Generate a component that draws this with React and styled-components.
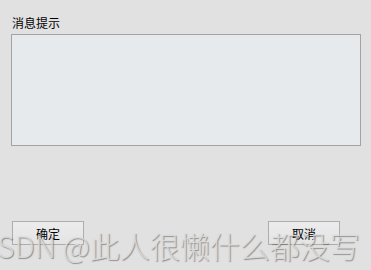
import React from "react";
import styled, { createGlobalStyle } from "styled-components";

const GlobalStyle = createGlobalStyle`
  html, body {
    margin: 0;
    padding: 0;
    background: #e1e1e1;
    font-family: "Noto Sans CJK SC", "Microsoft YaHei", sans-serif;
  }
`;

const Window = styled.div`
  position: relative;
  width: 371px;
  height: 270px;
  box-sizing: border-box;
  padding: 14px 10px 0 11px;
  display: flex;
  flex-direction: column;
  overflow: hidden;
`;

const Label = styled.div`
  font-size: 12px;
  line-height: 18px;
  color: #000;
  padding-left: 1px;
  margin-bottom: 2px;
`;

const MessageBox = styled.div`
  height: 110px;
  border: 1px solid #a3a3a3;
  background: #e6eaed;
`;

const ButtonRow = styled.div`
  display: flex;
  justify-content: space-between;
  margin-top: 75px;
  padding: 0 21px 0 1px;
`;

const Button = styled.button`
  width: 72px;
  height: 24px;
  padding: 0;
  border: 1px solid #adadad;
  background: linear-gradient(#ececec, #e4e4e4);
  font-family: "Noto Sans CJK SC", sans-serif;
  font-size: 12px;
  color: #000;
`;

// CSDN watermark laid over the bottom of the dialog
const Watermark = styled.div`
  position: absolute;
  left: -21px;
  top: 223px;
  white-space: nowrap;
  font-family: "Noto Sans CJK SC", sans-serif;
  font-weight: 300;
  font-size: 30px;
  color: rgba(222, 222, 222, 0.85);
  text-shadow: 1px 1px 1px rgba(90, 90, 90, 0.6);
  pointer-events: none;
`;

export default function App() {
  return (
    <>
      <GlobalStyle />
      <Window>
        <Label>消息提示</Label>
        <MessageBox />
        <ButtonRow>
          <Button>确定</Button>
          <Button>取消</Button>
        </ButtonRow>
        <Watermark>CSDN @此人很懒什么都没写</Watermark>
      </Window>
    </>
  );
}
